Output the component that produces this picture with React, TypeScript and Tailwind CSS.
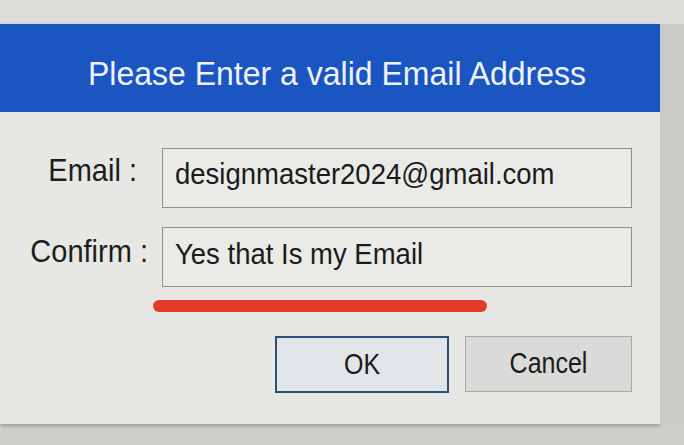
import React from 'react';

const App: React.FC = () => {
  return (
    <div
      className="w-[684px] h-[445px] overflow-hidden bg-[#cfcfcb] flex flex-col"
      style={{ fontFamily: '"Liberation Sans", Arial, sans-serif' }}
    >
      <div className="h-[24px] bg-[#dcdcd8] shrink-0" />
      <div className="flex">
        {/* dialog */}
        <div className="w-[660px] h-[400px] bg-[#e7e7e3] shadow-[0_2px_4px_rgba(0,0,0,0.25)] flex flex-col">
          <div className="h-[88px] bg-[#1b55c2] flex items-center justify-center pt-[10px] pl-[14px]">
            <h1 className="text-[32px] text-[#eef2fb] scale-y-[1.05]">Please Enter a valid Email Address</h1>
          </div>

          <div className="flex flex-col pl-[20px] pr-[28px] pt-[36px]">
            <div className="grid grid-cols-[142px_1fr] gap-y-[19px] items-center">
              <label className="text-[29px] text-[#1d1d1d] text-right pr-[25px] scale-y-[1.08] whitespace-nowrap -mt-[14px]">Email :</label>
              <div className="h-[60px] border border-[#8e8e8c] bg-[#eaeae7] flex items-center pl-[12px]">
                <span className="text-[27.5px] text-[#1b1b1b] scale-y-[1.1] -mt-[8px]">designmaster2024@gmail.com</span>
              </div>
              <label className="text-[29px] text-[#1d1d1d] text-right pr-[14px] scale-y-[1.08] whitespace-nowrap -mt-[10px]">Confirm :</label>
              <div className="h-[60px] border border-[#8e8e8c] bg-[#eaeae7] flex items-center pl-[12px]">
                <span className="text-[27.5px] text-[#1b1b1b] scale-y-[1.1] -mt-[6px]">Yes that Is my Email</span>
              </div>
            </div>

            <div className="ml-[133px] mt-[13px] w-[334px] h-[12px] rounded-full bg-[#e23b27]" />

            <div className="flex justify-end gap-[16px] mt-[24px]">
              <button className="w-[174px] h-[57px] border-2 border-[#2d5079] bg-[#e2e6e9] text-[25px] text-[#1b1b1b]">
                <span className="inline-block scale-y-[1.15]">OK</span>
              </button>
              <button className="w-[167px] h-[56px] border border-[#a9a9a7] bg-[#dadad8] text-[25px] text-[#1b1b1b]">
                <span className="inline-block scale-y-[1.15]">Cancel</span>
              </button>
            </div>
          </div>
        </div>
        <div className="flex-1 bg-[#c9c9c5]" />
      </div>
    </div>
  );
};

export default App;
